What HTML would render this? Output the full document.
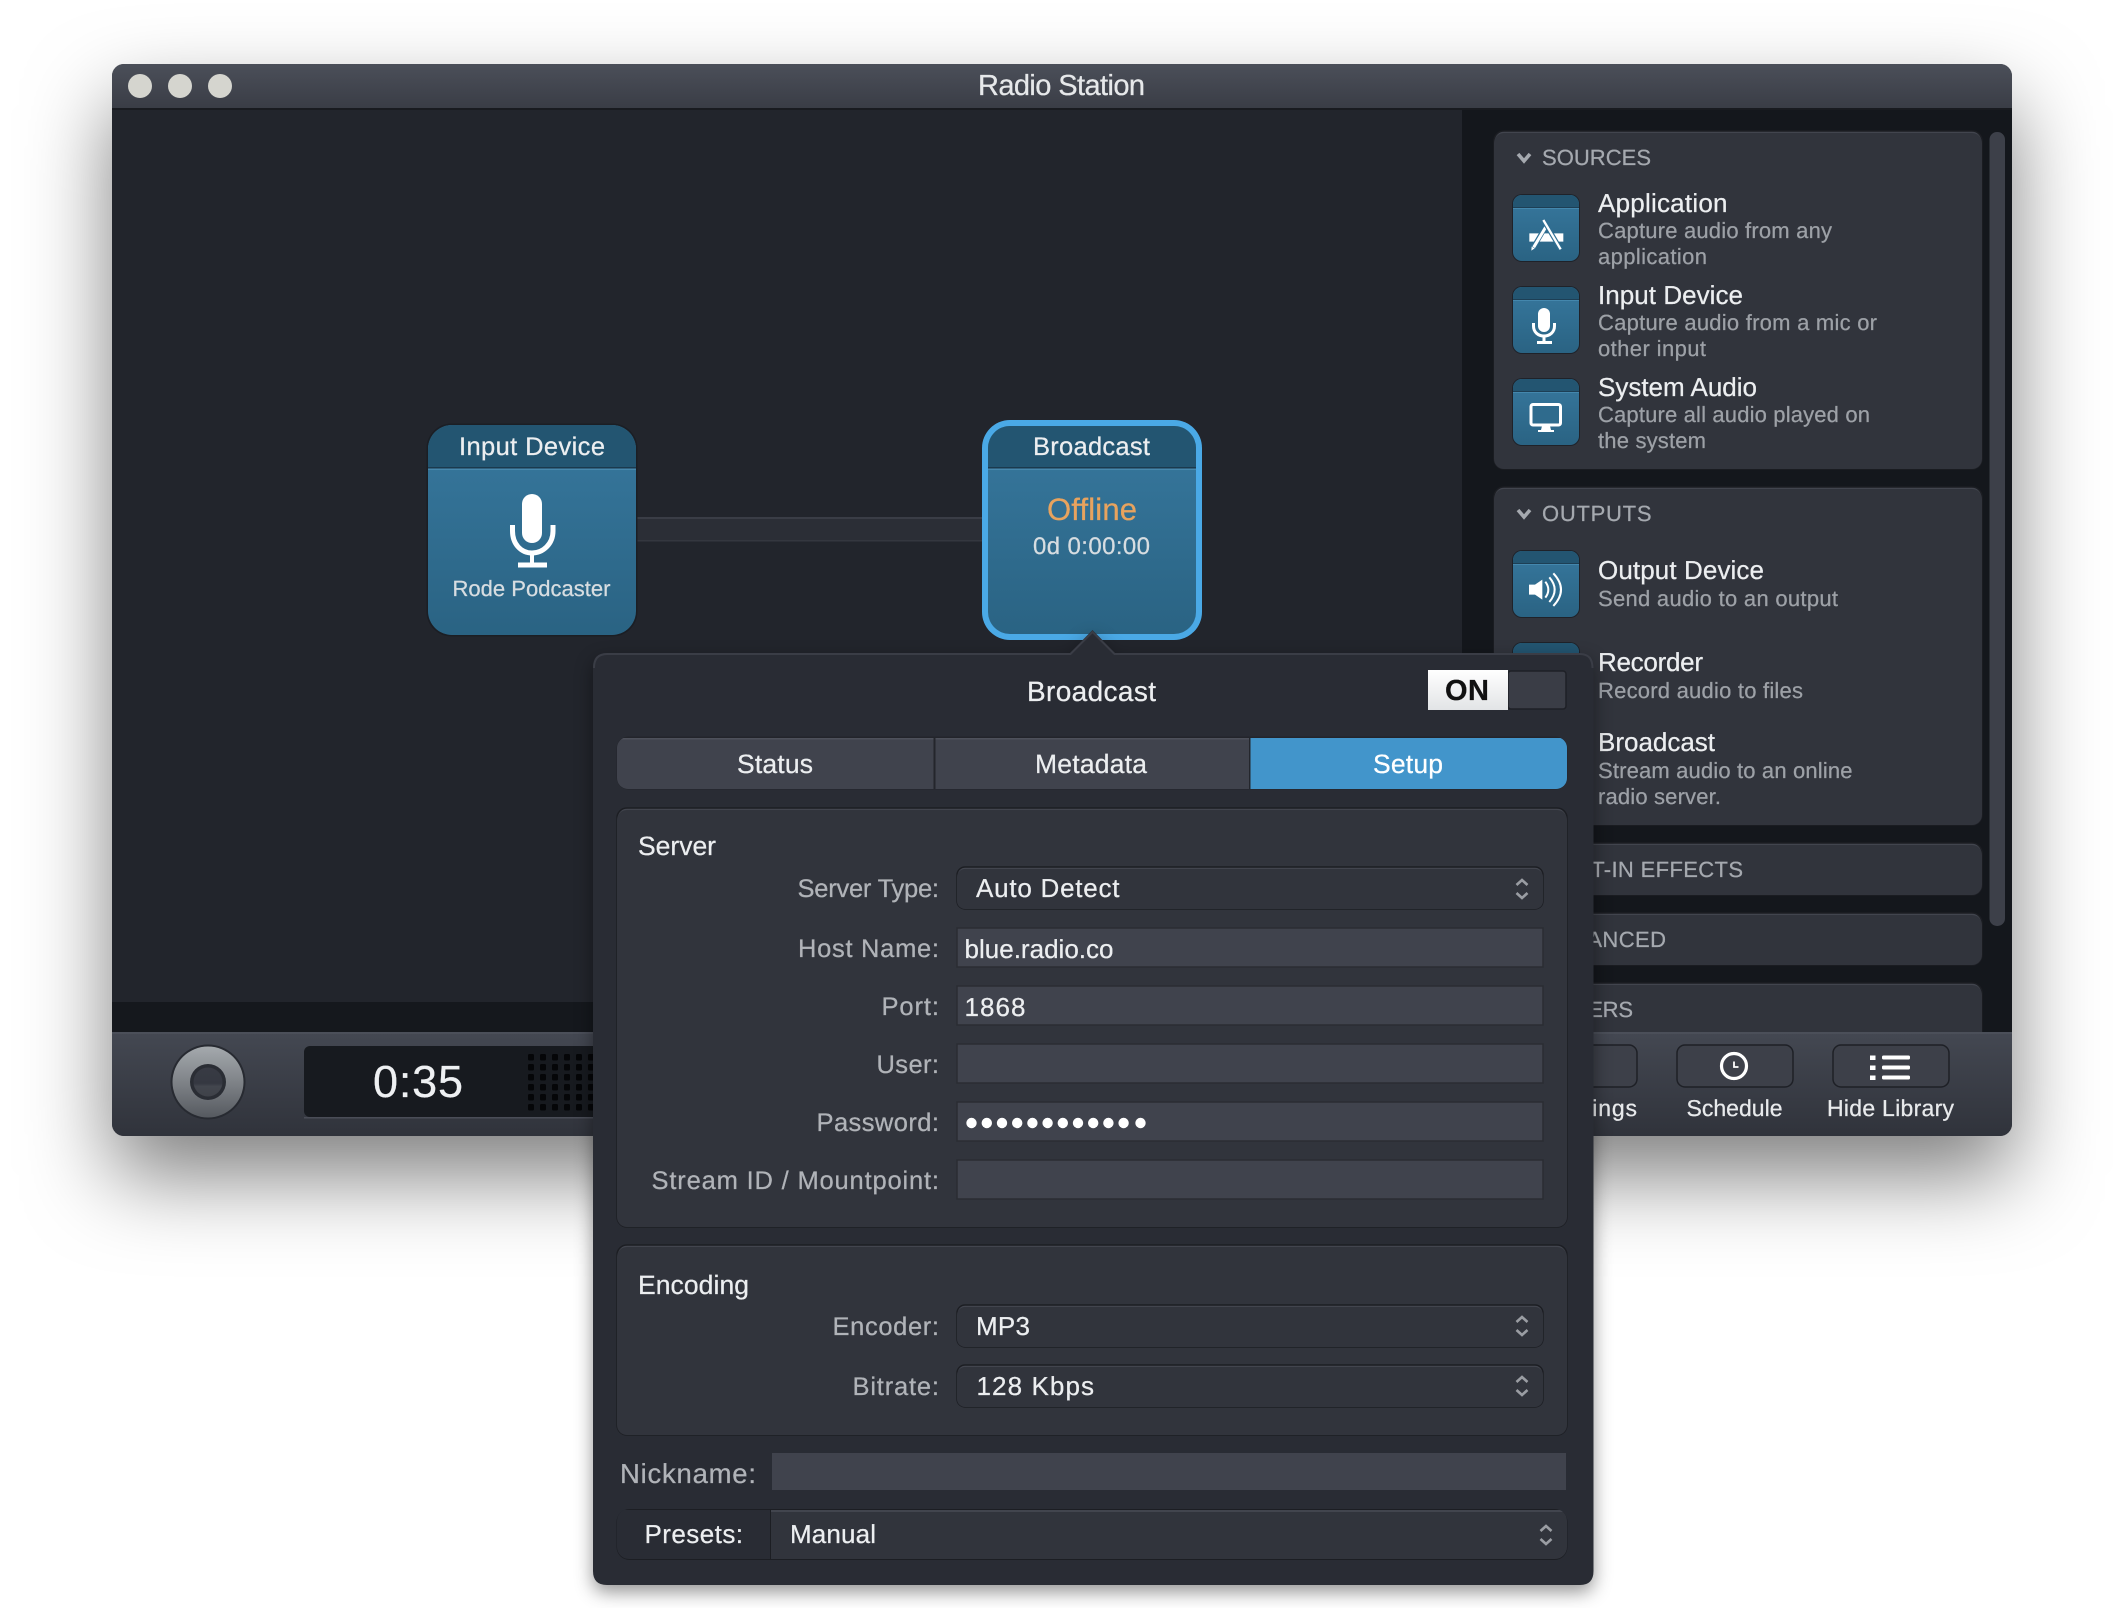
<!DOCTYPE html>
<html><head><meta charset="utf-8"><title>Radio Station</title>
<style>
html,body{margin:0;padding:0;background:#fff;width:2124px;height:1608px;overflow:hidden}
#sh{position:absolute;left:112px;top:64px;width:1900px;height:1072px;border-radius:12px;box-shadow:0 40px 84px rgba(0,0,0,.5)}
svg{position:absolute;left:0;top:0}
text{font-family:"Liberation Sans",sans-serif;text-rendering:geometricPrecision;fill:currentColor;stroke:currentColor;stroke-width:.25px}
.t{color:#eceef0;font-size:26px}
.s{color:#9da1a7;font-size:22px}
.h{color:#a5a9af;font-size:22px}
.l{color:#b0b3b8;font-size:25.5px}
.v{color:#eceef0;font-size:26px}
.b{color:#eceef0;font-size:26.5px}
.f{color:#e8eaec;font-size:23px}
</style></head><body>
<div id="sh"></div>
<svg width="2124" height="1608" viewBox="0 0 2124 1608" xmlns="http://www.w3.org/2000/svg">
<defs>
<clipPath id="win"><rect x="112" y="64" width="1900" height="1072" rx="12"/></clipPath>
<clipPath id="n1"><rect x="428" y="425" width="208" height="210" rx="24"/></clipPath>
<clipPath id="n2"><rect x="988" y="426" width="208" height="208" rx="22"/></clipPath>
<clipPath id="ic"><rect x="0" y="0" width="66" height="66" rx="9"/></clipPath>
<clipPath id="tabs"><rect x="617" y="737" width="950" height="52" rx="11"/></clipPath>
<clipPath id="pre"><rect x="617" y="1509" width="950" height="50" rx="12"/></clipPath>
<linearGradient id="tb" x1="0" y1="0" x2="0" y2="1"><stop offset="0" stop-color="#4b4f59"/><stop offset="1" stop-color="#3a3d46"/></linearGradient>
<linearGradient id="bt" x1="0" y1="0" x2="0" y2="1"><stop offset="0" stop-color="#444852"/><stop offset="1" stop-color="#30333b"/></linearGradient>
<linearGradient id="node" x1="0" y1="0" x2="0" y2="1"><stop offset="0" stop-color="#37789e"/><stop offset="1" stop-color="#2a6383"/></linearGradient>
<linearGradient id="knob" x1="0" y1="0" x2="0" y2="1"><stop offset="0" stop-color="#a4a9ad"/><stop offset=".5" stop-color="#7f8388"/><stop offset="1" stop-color="#565a60"/></linearGradient>
<linearGradient id="kin" x1="0" y1="0" x2="0" y2="1"><stop offset="0" stop-color="#383b44"/><stop offset=".55" stop-color="#353841"/><stop offset=".65" stop-color="#43464e"/><stop offset="1" stop-color="#3f4249"/></linearGradient>
<linearGradient id="sw" x1="0" y1="0" x2="0" y2="1"><stop offset="0" stop-color="#ffffff"/><stop offset="1" stop-color="#e2e4e6"/></linearGradient>
<g id="icon">
<rect x="-1" y="-1" width="68" height="68" rx="10" fill="#1f2229"/>
<g clip-path="url(#ic)">
<rect width="66" height="66" fill="url(#node)"/>
<rect width="66" height="12" fill="#235571"/>
<rect y="12" width="66" height="1" fill="#1d3f55"/>
<rect y="13" width="66" height="1" fill="#4487ad"/>
</g></g>
<g id="ud" fill="none" stroke="#9a9da3" stroke-width="2.6">
<path d="M-5.5 -4 L0 -9 L5.5 -4"/><path d="M-5.5 4 L0 9 L5.5 4"/>
</g>
<path id="chev" d="M-6 -4 L0 3 L6 -4" fill="none" stroke="#a5a9af" stroke-width="3.6"/>
</defs>

<g clip-path="url(#win)">
<rect x="112" y="64" width="1900" height="1072" fill="#22252c"/>
<!-- title bar -->
<rect x="112" y="64" width="1900" height="44" fill="url(#tb)"/>
<rect x="112" y="108" width="1900" height="2" fill="#191b20"/>
<circle cx="140" cy="86" r="12" fill="#d5d5cf"/><circle cx="180" cy="86" r="12" fill="#d5d5cf"/><circle cx="220" cy="86" r="12" fill="#d5d5cf"/>
<text x="978" y="95" textLength="167" style="font-size:29px;color:#e6e8ea">Radio Station</text>
<!-- sidebar -->
<rect x="1462" y="110" width="550" height="930" fill="#14171c"/>
<rect x="112" y="1002" width="1400" height="30" fill="#15181d"/>
<rect x="1989.5" y="132" width="15.5" height="794" rx="7.5" fill="#3d4049"/>

<!-- sources panel -->
<rect x="1494" y="131" width="488" height="338" rx="10" fill="#42454e" stroke="#1c1e23" stroke-width="1.5"/>
<rect x="1494" y="133" width="488" height="336" rx="10" fill="#31343c"/>
<use href="#chev" x="1524" y="158"/>
<text class="h" x="1542" y="165" textLength="109">SOURCES</text>
<use href="#icon" x="1513" y="195"/>
<use href="#icon" x="1513" y="287"/>
<use href="#icon" x="1513" y="379"/>
<!-- app icon -->
<g transform="translate(1510 190) scale(.3333)">
<path d="M58 130H160V155H58Z" fill="#fff"/>
<path d="M108 108L68 176" stroke="#2f6f93" stroke-width="15"/>
<path d="M108 110L71 172" stroke="#fff" stroke-width="9"/>
<path d="M65 170L74 175L64 182Z" fill="#fff"/>
<path d="M100 90L152 178" stroke="#2f6f93" stroke-width="14"/>
<path d="M100 90L152 178" stroke="#fff" stroke-width="7"/>
</g>
<!-- mic small -->
<g fill="none" stroke="#fff">
<rect x="1538" y="308" width="12" height="24" rx="6" fill="#fff" stroke="none"/>
<path d="M1533.5 323V326C1533.5 332 1538 336 1544 336S1554.500 332 1554.500 326V323" stroke-width="3"/>
<path d="M1544 336V342" stroke-width="3"/>
<path d="M1537 342.500H1552" stroke-width="3"/>
</g>
<!-- monitor -->
<rect x="1531" y="404.500" width="29.500" height="20.500" rx="2" fill="#2f6b8d" stroke="#fff" stroke-width="3"/>
<path d="M1542 426H1550L1551 430H1554V432H1538V430H1541Z" fill="#fff"/>
<text class="t" x="1598" y="212" textLength="129.500">Application</text>
<text class="s" x="1598" y="238" textLength="234">Capture audio from any</text>
<text class="s" x="1598" y="264" textLength="109">application</text>
<text class="t" x="1598" y="304" textLength="145">Input Device</text>
<text class="s" x="1598" y="330" textLength="279">Capture audio from a mic or</text>
<text class="s" x="1598" y="356" textLength="108">other input</text>
<text class="t" x="1598" y="396" textLength="159">System Audio</text>
<text class="s" x="1598" y="422" textLength="272">Capture all audio played on</text>
<text class="s" x="1598" y="448" textLength="108">the system</text>

<!-- outputs panel -->
<rect x="1494" y="487" width="488" height="338" rx="10" fill="#42454e" stroke="#1c1e23" stroke-width="1.5"/>
<rect x="1494" y="489" width="488" height="336" rx="10" fill="#31343c"/>
<use href="#chev" x="1524" y="514"/>
<text class="h" x="1542" y="521" textLength="109.500">OUTPUTS</text>
<use href="#icon" x="1513" y="551"/>
<use href="#icon" x="1513" y="643"/>
<use href="#icon" x="1513" y="723"/>
<g transform="translate(1510 548) scale(.3333)" fill="none" stroke="#fff" stroke-width="6">
<path d="M57 110H75L97 95V155L75 140H57Z" fill="#fff" stroke="none"/>
<path d="M106 101Q124 125 106 149"/><path d="M118 88Q150 125 118 162"/><path d="M130 76Q176 125 130 174"/>
</g>
<text class="t" x="1598" y="579" textLength="166">Output Device</text>
<text class="s" x="1598" y="606" textLength="240">Send audio to an output</text>
<text class="t" x="1598" y="671" textLength="105">Recorder</text>
<text class="s" x="1598" y="698" textLength="205">Record audio to files</text>
<text class="t" x="1598" y="751" textLength="117">Broadcast</text>
<text class="s" x="1598" y="778" textLength="254.500">Stream audio to an online</text>
<text class="s" x="1598" y="804" textLength="123">radio server.</text>

<!-- collapsed panels -->
<rect x="1494" y="843" width="488" height="52" rx="10" fill="#42454e" stroke="#1c1e23" stroke-width="1.5"/>
<rect x="1494" y="845" width="488" height="50" rx="10" fill="#31343c"/>
<text class="h" x="1542.5" y="877" textLength="200.500">BUILT-IN EFFECTS</text>
<rect x="1494" y="913" width="488" height="52" rx="10" fill="#42454e" stroke="#1c1e23" stroke-width="1.5"/>
<rect x="1494" y="915" width="488" height="50" rx="10" fill="#31343c"/>
<text class="h" x="1542.5" y="947" textLength="123.500">ADVANCED</text>
<rect x="1494" y="983" width="488" height="60" rx="10" fill="#42454e" stroke="#1c1e23" stroke-width="1.5"/>
<rect x="1494" y="985" width="488" height="60" rx="10" fill="#31343c"/>
<text class="h" x="1542.5" y="1017" textLength="90.500">OTHERS</text>

<!-- connector -->
<rect x="636" y="517" width="346" height="24" fill="#2b2e36"/>
<rect x="636" y="517" width="346" height="2" fill="#3a3d46"/>
<rect x="636" y="540" width="346" height="1.500" fill="#34373f"/>

<!-- node 1 -->
<rect x="426.500" y="423.500" width="211" height="213" rx="25" fill="#1b1e24"/>
<g clip-path="url(#n1)">
<rect x="428" y="425" width="208" height="210" fill="url(#node)"/>
<rect x="428" y="425" width="208" height="42" fill="#235571"/>
<rect x="428" y="467" width="208" height="1.500" fill="#1b3a4e"/>
<rect x="428" y="468.500" width="208" height="1.500" fill="#4788ad"/>
</g>
<text x="459" y="455" textLength="146" style="font-size:25.5px;color:#eceef0">Input Device</text>
<g fill="none" stroke="#fff">
<rect x="522" y="494" width="20" height="49" rx="10" fill="#fff" stroke="none"/>
<path d="M512.500 525V531C512.500 544 521 553 532 553S553 544 553 531V525" stroke-width="5"/>
<path d="M532 553V564" stroke-width="4"/>
<path d="M518 565H547" stroke-width="5"/>
</g>
<text x="452.500" y="596" textLength="158" style="font-size:22px;color:#d7dde1">Rode Podcaster</text>

<!-- node 2 -->
<rect x="982" y="420" width="220" height="220" rx="28" fill="#4aa9e6"/>
<g clip-path="url(#n2)">
<rect x="988" y="426" width="208" height="208" fill="url(#node)"/>
<rect x="988" y="426" width="208" height="41" fill="#235571"/>
<rect x="988" y="467" width="208" height="1.500" fill="#1b3a4e"/>
<rect x="988" y="468.500" width="208" height="1.500" fill="#4788ad"/>
</g>
<text x="1033" y="455" textLength="117" style="font-size:25.5px;color:#eceef0">Broadcast</text>
<text x="1047" y="520" textLength="90" style="font-size:31px;color:#e8a35e">Offline</text>
<text x="1033" y="554" textLength="117" style="font-size:24px;color:#d7dde1">0d 0:00:00</text>

<!-- bottom toolbar -->
<rect x="112" y="1032" width="1900" height="104" fill="url(#bt)"/>
<rect x="112" y="1032" width="1900" height="2" fill="#4b4f59"/>
<circle cx="208" cy="1082" r="37.500" fill="#272a31"/>
<circle cx="208" cy="1082" r="35.500" fill="url(#knob)"/>
<circle cx="208" cy="1082" r="18" fill="#2a2d34"/>
<circle cx="208" cy="1082" r="14.500" fill="url(#kin)"/>
<rect x="304" y="1046" width="320" height="71" rx="6" fill="#171a1f"/>
<rect x="304" y="1117" width="320" height="1.500" fill="#4a4d57"/>
<text x="373" y="1097" textLength="90" style="font-size:45px;color:#eef0f2">0:35</text>
<g fill="#050608">
<rect x="528" y="1054" width="6" height="6.500" rx="1.500"/><rect x="540" y="1054" width="6" height="6.500" rx="1.500"/><rect x="552" y="1054" width="6" height="6.500" rx="1.500"/><rect x="564" y="1054" width="6" height="6.500" rx="1.500"/><rect x="576" y="1054" width="6" height="6.500" rx="1.500"/><rect x="588" y="1054" width="6" height="6.500" rx="1.500"/>
<rect x="528" y="1064" width="6" height="6.500" rx="1.500"/><rect x="540" y="1064" width="6" height="6.500" rx="1.500"/><rect x="552" y="1064" width="6" height="6.500" rx="1.500"/><rect x="564" y="1064" width="6" height="6.500" rx="1.500"/><rect x="576" y="1064" width="6" height="6.500" rx="1.500"/><rect x="588" y="1064" width="6" height="6.500" rx="1.500"/>
<rect x="528" y="1074" width="6" height="6.500" rx="1.500"/><rect x="540" y="1074" width="6" height="6.500" rx="1.500"/><rect x="552" y="1074" width="6" height="6.500" rx="1.500"/><rect x="564" y="1074" width="6" height="6.500" rx="1.500"/><rect x="576" y="1074" width="6" height="6.500" rx="1.500"/><rect x="588" y="1074" width="6" height="6.500" rx="1.500"/>
<rect x="528" y="1084" width="6" height="6.500" rx="1.500"/><rect x="540" y="1084" width="6" height="6.500" rx="1.500"/><rect x="552" y="1084" width="6" height="6.500" rx="1.500"/><rect x="564" y="1084" width="6" height="6.500" rx="1.500"/><rect x="576" y="1084" width="6" height="6.500" rx="1.500"/><rect x="588" y="1084" width="6" height="6.500" rx="1.500"/>
<rect x="528" y="1094" width="6" height="6.500" rx="1.500"/><rect x="540" y="1094" width="6" height="6.500" rx="1.500"/><rect x="552" y="1094" width="6" height="6.500" rx="1.500"/><rect x="564" y="1094" width="6" height="6.500" rx="1.500"/><rect x="576" y="1094" width="6" height="6.500" rx="1.500"/><rect x="588" y="1094" width="6" height="6.500" rx="1.500"/>
<rect x="528" y="1104" width="6" height="6.500" rx="1.500"/><rect x="540" y="1104" width="6" height="6.500" rx="1.500"/><rect x="552" y="1104" width="6" height="6.500" rx="1.500"/><rect x="564" y="1104" width="6" height="6.500" rx="1.500"/><rect x="576" y="1104" width="6" height="6.500" rx="1.500"/><rect x="588" y="1104" width="6" height="6.500" rx="1.500"/>
</g>
<!-- toolbar buttons -->
<g fill="#3d4049" stroke="#1e2026" stroke-width="1.500">
<rect x="1521" y="1045" width="116" height="42" rx="8"/>
<rect x="1677" y="1045" width="116" height="42" rx="8"/>
<rect x="1833" y="1045" width="116" height="42" rx="8"/>
</g>
<circle cx="1734" cy="1066" r="12.500" fill="none" stroke="#fff" stroke-width="3.200"/>
<path d="M1734 1061.500V1067H1738.500" fill="none" stroke="#fff" stroke-width="1.800"/>
<g fill="#fff">
<rect x="1870" y="1055.500" width="5.500" height="4.500"/><rect x="1870" y="1065.500" width="5.500" height="4.500"/><rect x="1870" y="1075.500" width="5.500" height="4.500"/>
<rect x="1882" y="1055.500" width="28" height="4" rx="1.500"/><rect x="1882" y="1065.500" width="28" height="4" rx="1.500"/><rect x="1882" y="1075.500" width="28" height="4" rx="1.500"/>
</g>
<text class="f" x="1548" y="1116" textLength="89">Settings</text>
<text class="f" x="1686.500" y="1116" textLength="96">Schedule</text>
<text class="f" x="1827" y="1116" textLength="127">Hide Library</text>
</g>

<!-- popover -->
<path d="M607 653H1070L1092.500 630L1115 653H1580Q1593.500 653 1593.500 667V1571Q1593.500 1585 1580 1585H607Q593 1585 593 1571V667Q593 653 607 653Z" fill="#292c34" style="filter:drop-shadow(0 7px 9px rgba(0,0,0,.42))"/>
<path d="M594 668Q594 654 607 654H1070.500L1092.500 632L1114.500 654H1580Q1592.500 654 1592.500 668" fill="none" stroke="#3a3d46" stroke-width="2"/>
<text x="1027" y="701" textLength="129" style="font-size:28px;color:#eceef0">Broadcast</text>
<rect x="1508" y="671" width="58" height="38" rx="3" fill="#3a3d46" stroke="#1e2026" stroke-width="1.500"/>
<rect x="1428" y="670" width="80" height="40" fill="url(#sw)"/>
<text x="1445" y="700" textLength="44" style="font-size:29px;font-weight:bold;color:#111">ON</text>
<!-- tabs -->
<rect x="616.500" y="736.500" width="951" height="53" rx="12" fill="#23252b"/>
<g clip-path="url(#tabs)">
<rect x="617" y="738" width="950" height="51" fill="#40434d"/>
<rect x="617" y="738" width="633" height="1.500" fill="#4e515b"/>
<rect x="1250" y="738" width="317" height="51" fill="#4295cb"/>
<rect x="933.500" y="738" width="2" height="51" fill="#24262c"/>
<rect x="1249" y="738" width="1.500" height="51" fill="#24262c"/>
</g>
<text class="b" x="737" y="773" textLength="76">Status</text>
<text class="b" x="1035" y="773" textLength="112">Metadata</text>
<text class="b" x="1373" y="773" textLength="70" style="color:#fff">Setup</text>

<!-- server group -->
<rect x="617" y="808" width="950" height="419" rx="10" fill="#42454e" stroke="#1c1e23" stroke-width="1.500"/>
<rect x="617" y="810" width="950" height="417" rx="10" fill="#31343c"/>
<text class="b" x="638" y="855" textLength="78">Server</text>
<text class="l" x="797.500" y="897" textLength="141.500">Server Type:</text>
<rect x="957" y="867" width="586" height="42" rx="8" fill="#42454e" stroke="#1c1e23" stroke-width="1.500"/>
<rect x="957" y="869" width="586" height="40" rx="8" fill="#31343c"/>
<text class="v" x="976" y="897" textLength="143.500">Auto Detect</text>
<use href="#ud" x="1522" y="889"/>

<g fill="#40434d" stroke="#2a2c33" stroke-width="1.500">
<rect x="957" y="928" width="586" height="39"/>
<rect x="957" y="986" width="586" height="39"/>
<rect x="957" y="1044" width="586" height="39"/>
<rect x="957" y="1102" width="586" height="39"/>
<rect x="957" y="1160" width="586" height="39"/>
</g>
<text class="l" x="798" y="957" textLength="141">Host Name:</text>
<text class="v" x="964.500" y="958" textLength="149">blue.radio.co</text>
<text class="l" x="881.500" y="1015" textLength="57.500">Port:</text>
<text class="v" x="964.500" y="1016" textLength="61">1868</text>
<text class="l" x="876.500" y="1073" textLength="62.500">User:</text>
<text class="l" x="816.500" y="1131" textLength="122.500">Password:</text>
<g fill="#fff">
<circle cx="971.500" cy="1123" r="5.200"/><circle cx="986.800" cy="1123" r="5.200"/><circle cx="1002" cy="1123" r="5.200"/><circle cx="1017.200" cy="1123" r="5.200"/><circle cx="1032.400" cy="1123" r="5.200"/><circle cx="1047.600" cy="1123" r="5.200"/><circle cx="1062.800" cy="1123" r="5.200"/><circle cx="1078" cy="1123" r="5.200"/><circle cx="1093.200" cy="1123" r="5.200"/><circle cx="1108.400" cy="1123" r="5.200"/><circle cx="1123.600" cy="1123" r="5.200"/><circle cx="1140.500" cy="1123" r="5.200"/>
</g>
<text class="l" x="651.500" y="1189" textLength="287.500">Stream ID / Mountpoint:</text>

<!-- encoding group -->
<rect x="617" y="1245" width="950" height="190" rx="10" fill="#42454e" stroke="#1c1e23" stroke-width="1.500"/>
<rect x="617" y="1247" width="950" height="188" rx="10" fill="#31343c"/>
<text class="b" x="638" y="1294" textLength="111">Encoding</text>
<text class="l" x="832.500" y="1335" textLength="106.500">Encoder:</text>
<rect x="957" y="1305" width="586" height="42" rx="8" fill="#42454e" stroke="#1c1e23" stroke-width="1.500"/>
<rect x="957" y="1307" width="586" height="40" rx="8" fill="#31343c"/>
<text class="v" x="976" y="1335" textLength="54">MP3</text>
<use href="#ud" x="1522" y="1326"/>
<text class="l" x="852.500" y="1395" textLength="86.500">Bitrate:</text>
<rect x="957" y="1365" width="586" height="42" rx="8" fill="#42454e" stroke="#1c1e23" stroke-width="1.500"/>
<rect x="957" y="1367" width="586" height="40" rx="8" fill="#31343c"/>
<text class="v" x="976.500" y="1395" textLength="117.500">128 Kbps</text>
<use href="#ud" x="1522" y="1386"/>

<!-- nickname / presets -->
<text x="620" y="1483" textLength="136" style="font-size:27.500px;color:#b0b3b8">Nickname:</text>
<rect x="772" y="1453" width="794" height="37" fill="#40434d"/>
<rect x="616.500" y="1509" width="951" height="51" rx="13" fill="#1c1e23"/>
<g clip-path="url(#pre)">
<rect x="617" y="1510" width="153" height="49" fill="#292c34"/>
<rect x="771" y="1510" width="796" height="49" fill="#31343c"/>
<rect x="771" y="1510" width="796" height="2" fill="#42454e"/>
</g>
<text class="v" x="644.500" y="1543" textLength="98.500">Presets:</text>
<text class="v" x="790" y="1543" textLength="86">Manual</text>
<use href="#ud" x="1546" y="1535"/>
</svg>
</body></html>
